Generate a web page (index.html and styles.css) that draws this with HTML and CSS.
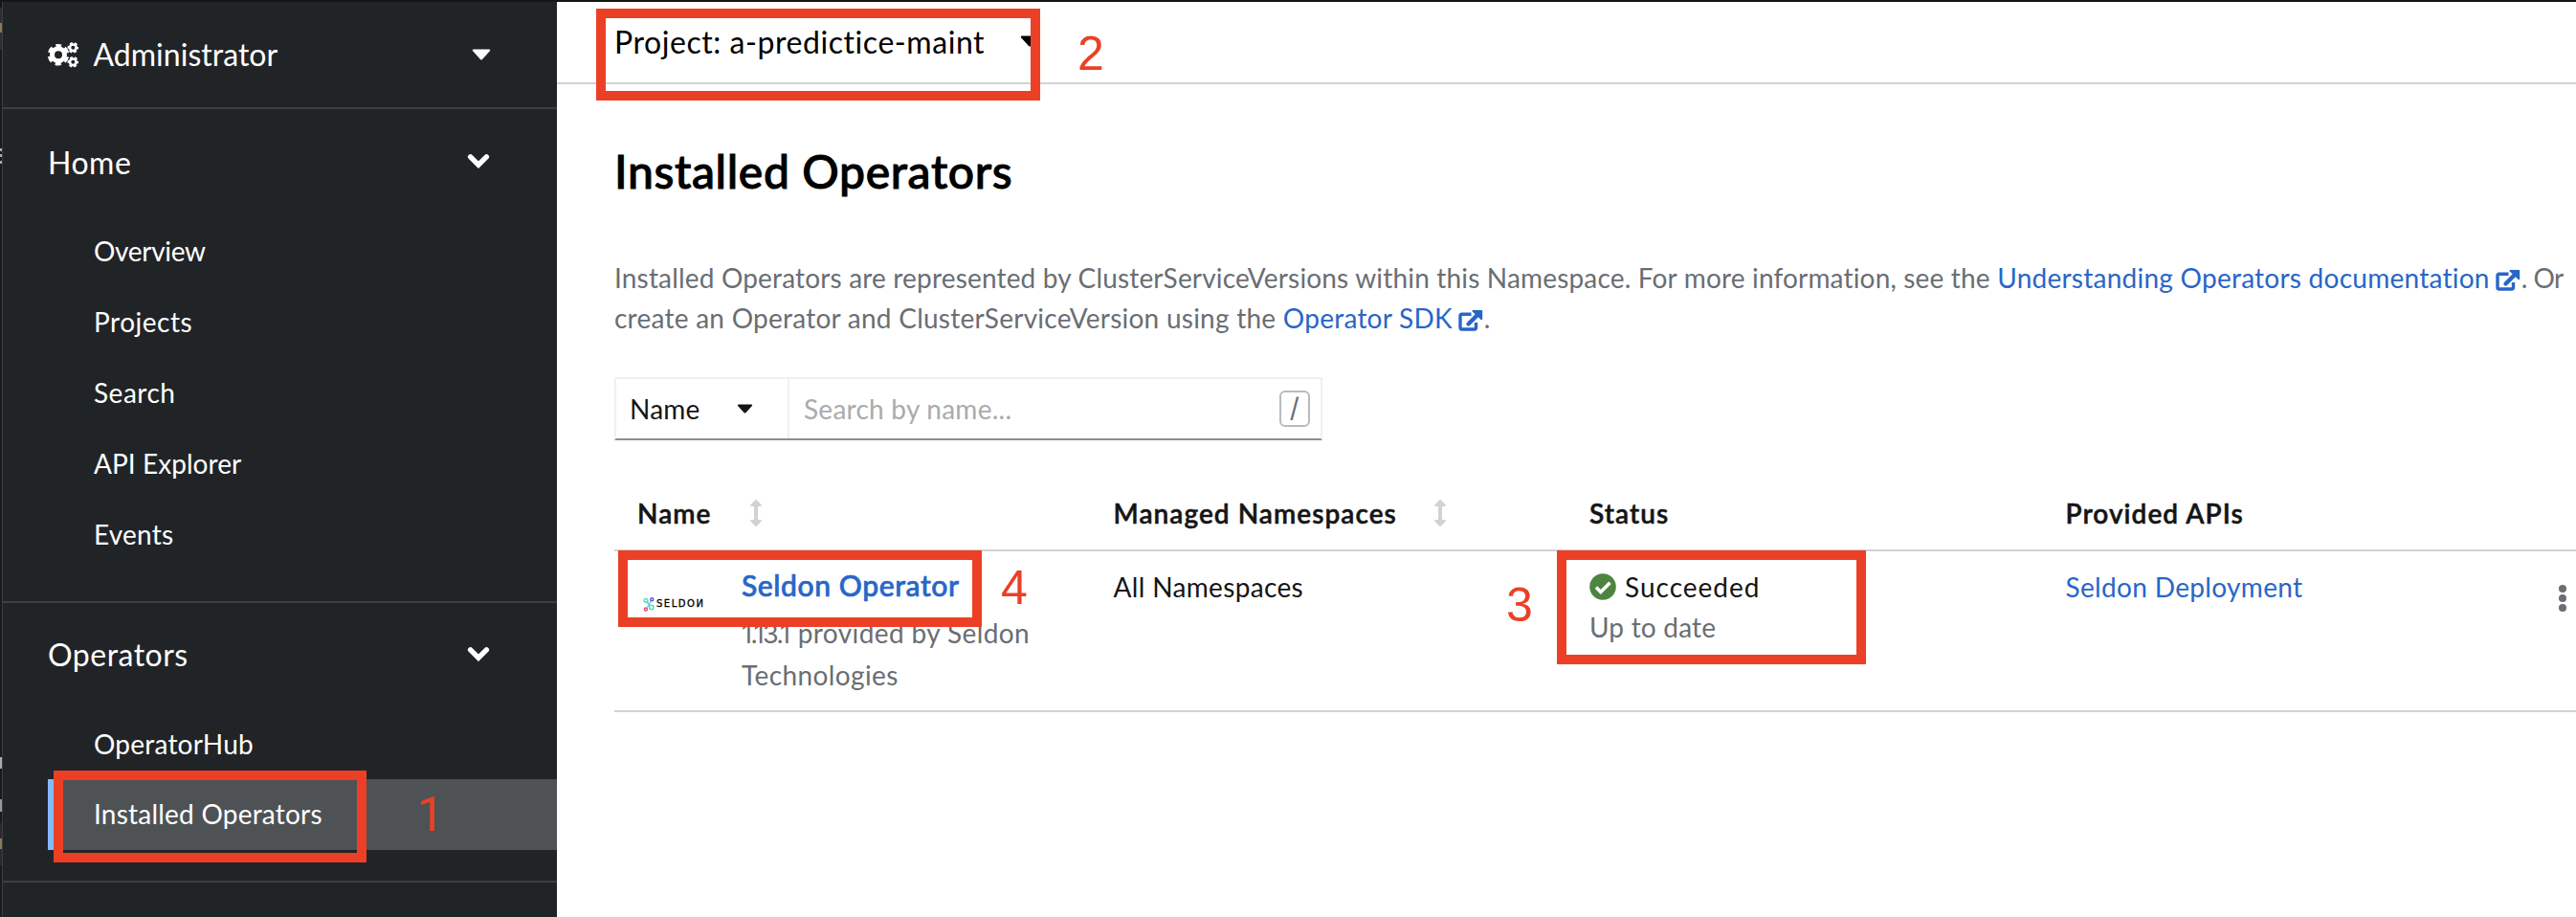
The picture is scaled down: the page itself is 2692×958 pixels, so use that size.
FILE: index.html
```
<!DOCTYPE html>
<html lang="en">
<head>
<meta charset="utf-8">
<title>Installed Operators</title>
<link rel="stylesheet" href="styles.css">
</head>
<body>
<svg class="defs" width="0" height="0">
  <symbol id="chevron" viewBox="0 0 24 16"><path d="M3.6 3.8 12 12.2 20.4 3.8" fill="none" stroke="currentColor" stroke-width="5.4" stroke-linecap="round"/></symbol>
  <symbol id="caret" viewBox="0 0 20 12"><path d="M1.6.5h16.8q1.4.6.5 1.8L11 11q-1 1-2 0L1.1 2.3Q.2 1.1 1.6.5z" fill="currentColor"/></symbol>
  <symbol id="external" viewBox="0 0 26 24"><path d="M13.5 5.3H3.6q-1.6 0-1.6 1.6v12.4q0 1.7 1.6 1.7h13.2q1.7 0 1.7-1.7V14" fill="none" stroke="currentColor" stroke-width="3.4"/><path d="M10.5 15.5 21.5 4.5" stroke="currentColor" stroke-width="4.4" stroke-linecap="round"/><path d="M15.2 1h9q1 0 1 1v8.6q-.6 1.2-1.6.3L14.7 2.5q-.7-1 .5-1.5z" fill="currentColor"/></symbol>
  <symbol id="sort" viewBox="0 0 12 28"><path d="M6 0q.6 0 1 .5l4.7 4.9q.7 1.4-.7 1.7H8v13.8h3q1.4.3.7 1.7L7 27.5q-1 .9-2 0L.3 22.6q-.7-1.4.7-1.7h3V7.1H1Q-.4 6.800.3 5.400L5 .5Q5.400 0 6 0z" fill="currentColor"/></symbol>
</svg>
<div class="app">
  <div class="rail"></div>
  <nav class="sidebar">
    <div class="perspective">
      <svg class="cogs" viewBox="0 0 34 32" fill="none" stroke="#fff">
        <circle cx="12" cy="16.200" r="6.500" stroke-width="5"/>
        <circle cx="12" cy="16.200" r="9.300" stroke-width="4" stroke-dasharray="5.800 3.940" stroke-dashoffset="2.900" transform="rotate(-90 12 16.200)"/>
        <circle cx="27.300" cy="8.800" r="3.300" stroke-width="2.600"/>
        <circle cx="27.300" cy="8.800" r="4.700" stroke-width="2.200" stroke-dasharray="2.800 2.122" stroke-dashoffset="1.400"/>
        <circle cx="27.300" cy="23.800" r="3.300" stroke-width="2.600"/>
        <circle cx="27.300" cy="23.800" r="4.700" stroke-width="2.200" stroke-dasharray="2.800 2.122" stroke-dashoffset="1.400"/>
      </svg>
      <span>Administrator</span>
      <svg class="caret push"><use href="#caret"/></svg>
    </div>
    <section class="group">
      <div class="group-title home"><span>Home</span><svg class="chevron push"><use href="#chevron"/></svg></div>
      <a class="item overview">Overview</a>
      <a class="item projects">Projects</a>
      <a class="item projects">Search</a>
      <a class="item api">API Explorer</a>
      <a class="item">Events</a>
    </section>
    <section class="group operators">
      <div class="group-title"><span>Operators</span><svg class="chevron push"><use href="#chevron"/></svg></div>
      <a class="item">OperatorHub</a>
      <a class="item active">Installed Operators</a>
    </section>
  </nav>
  <main class="main">
    <div class="project"><span>Project: a-predictice-maint</span><svg class="caret"><use href="#caret"/></svg></div>
    <div class="content">
      <h1>Installed Operators</h1>
      <p class="intro"><span class="lead">Installed Operators are represented by ClusterServiceVersions within this Namespace. For more information, see the</span> <a>Understanding Operators documentation<svg class="ext"><use href="#external"/></svg></a><span class="tail">. Or</span><br>create an Operator and ClusterServiceVersion using the <a>Operator SDK<svg class="ext"><use href="#external"/></svg></a><span class="tail">.</span></p>
      <div class="filter">
        <div class="select"><span>Name</span><svg class="caret small"><use href="#caret"/></svg></div>
        <div class="search"><span>Search by name...</span><kbd>/</kbd></div>
      </div>
      <div class="table">
        <div class="row head">
          <div class="cell">Name<svg class="sort n"><use href="#sort"/></svg></div>
          <div class="cell">Managed Namespaces<svg class="sort m"><use href="#sort"/></svg></div>
          <div class="cell">Status</div>
          <div class="cell">Provided APIs</div>
        </div>
        <div class="row">
          <div class="cell operator">
            <div class="logo">
              <svg viewBox="0 0 12 15" fill="none" stroke-width="1.500"><circle cx="3" cy="3.300" r="1.900" stroke="#5cd8c8"/><circle cx="8.800" cy="10.500" r="2.200" stroke="#5cd8c8"/><path d="M4 5 7.400 9M4.500 10.500 8 4" stroke="#5cd8c8"/><circle cx="9.300" cy="2.300" r="1.500" stroke="#5b5be6"/><circle cx="2.900" cy="12.400" r="1.500" stroke="#e94b72"/></svg>
              <span class="brand">SELDO<i>N</i></span>
            </div>
            <div class="about">
              <a class="name">Seldon Operator</a>
              <div class="sub"><span class="version">1.13.1</span> provided by Seldon<br>Technologies</div>
            </div>
          </div>
          <div class="cell ns">All Namespaces</div>
          <div class="cell">
            <div class="status"><svg viewBox="0 0 28 28"><circle cx="14" cy="14" r="13.800" fill="#4f8440"/><path d="m7 14.600 4.800 4.800L21.500 9.700" fill="none" stroke="#fff" stroke-width="3.600"/></svg><span>Succeeded</span></div>
            <div class="muted">Up to date</div>
          </div>
          <div class="cell ns"><a>Seldon Deployment</a></div>
          <div class="kebab"><i></i><i></i><i></i></div>
        </div>
      </div>
    </div>
  </main>
  <div class="box b1"></div><div class="num n1">1</div>
  <div class="box b2"></div><div class="num n2">2</div>
  <div class="box b3"></div><div class="num n3">3</div>
  <div class="box b4"></div><div class="num n4">4</div>
</div>
</body>
</html>
```
FILE: styles.css
```
* { box-sizing: border-box; }
body { margin: 0; font: 28px/42px Lato, "Open Sans", sans-serif; color: #151515; letter-spacing: .2px; background: #fff; }
svg { display: block; flex: none; }
.defs { position: absolute; }
a { color: #2866c8; }
.app { position: relative; display: flex; width: 2692px; height: 958px; border-top: 2px solid #151515; overflow: hidden; }

.rail { width: 2px; background: linear-gradient(#151515 6px, #2e2f34 6px 22px, #8c7b55 22px 32px, #2e2f34 32px 50px, #1a1a1a 50px 153px, #aaa 153px 156px, #1a1a1a 156px 159px, #aaa 159px 162px, #1a1a1a 162px 166px, #aaa 166px 169px, #1a1a1a 169px 789px, #aaa 789px 801px, #1a1a1a 801px 833px, #999 833px 846px, #1a1a1a 846px 858px, #2a2a2f 858px 874px, #8c7b55 874px 885px, #2a2a2f 885px 902px, #1a1a1a 902px); }
.sidebar { width: 580px; flex: none; background: #212427; border-left: 1px solid #3c3f42; color: #fff; }
.perspective { display: flex; align-items: center; height: 112px; padding: 0 69px 0 46px; border-bottom: 2px solid #3c3f42; font-size: 32px; letter-spacing: .02px; }
.cogs { width: 34px; height: 32px; margin-right: 14.500px; }
.push { margin-left: auto; }
.caret { width: 20px; height: 12px; }
.chevron { width: 24px; height: 16px; margin-bottom: 3px; }
.group { display: flex; flex-direction: column; height: 516px; border-bottom: 2px solid #3c3f42; }
.group.operators { height: 292px; }
.group-title { display: flex; align-items: center; height: 110px; padding: 0 70px 2px 47px; font-size: 32px; letter-spacing: .5px; }
.group-title.home { height: 111px; padding-bottom: 0; }
.item { height: 74px; padding-left: 95px; line-height: 75px; color: #fff; letter-spacing: .22px; }
.item.overview { letter-spacing: -.3px; }
.item.projects { letter-spacing: .5px; }
.item.api { letter-spacing: .05px; }
.item.active { margin-left: 47px; padding-left: 40px; border-left: 8px solid #84b9f7; background: #4f5255; line-height: 73px; }

.main { flex: 1; }
.project { display: flex; align-items: center; height: 86px; padding: 0 0 0 60px; border-bottom: 2px solid #d2d2d2; font-size: 32px; letter-spacing: .56px; color: #000; }
.project .caret { margin: 0 0 2px 37px; }
.content { padding: 61px 0 0 60px; }
h1 { margin: 0; font-size: 48px; line-height: 60px; font-weight: 500; letter-spacing: .65px; color: #000; -webkit-text-stroke: 1px #000; }
.intro { margin: 60px 0 0; color: #6a6e73; white-space: nowrap; letter-spacing: .25px; }
.lead { letter-spacing: .17px; }
.tail { letter-spacing: -.5px; }
.ext { display: inline-block; width: 26px; height: 24px; margin: 0 1px 0 6px; vertical-align: -4px; }
.filter { display: flex; width: 740px; height: 66px; margin-top: 41px; border: 2px solid #f0f0f0; border-bottom-color: #8a8d90; }
.select { display: flex; align-items: center; width: 181px; padding-left: 14px; border-right: 2px solid #f0f0f0; }
.caret.small { width: 17px; height: 10px; margin-left: 38px; }
.search { display: flex; flex: 1; align-items: center; justify-content: space-between; padding: 0 11px 0 15px; color: #aaabac; letter-spacing: .25px; }
kbd { width: 32px; height: 38px; border: 2px solid #b8bbbe; border-radius: 6px; font: 28px/33px Inter, sans-serif; color: #6a6e73; text-align: center; }

.table { margin-top: 38px; }
.row { position: relative; display: grid; grid-template-columns: repeat(4, 497.500px) 1fr; height: 168px; padding: 16px 0 0 24px; border-bottom: 2px solid #d2d2d2; }
.row.head { height: 78px; padding-top: 17px; font-weight: 600; letter-spacing: 1.050px; -webkit-text-stroke: .5px #151515; }
.head .cell { display: flex; align-items: center; height: 42px; }
.sort { width: 12px; height: 28px; color: #d2d2d2; }
.sort.n { margin-left: 40px; }
.sort.m { margin-left: 39px; }
.operator { display: flex; margin-top: -2px; }
.logo { display: flex; align-items: center; width: 103px; height: 16px; margin: 33px 0 0 6px; }
.logo svg { width: 12px; height: 15px; margin-right: 2px; }
.brand { font: 10px/16px "DejaVu Sans", sans-serif; letter-spacing: 1.500px; color: #000; -webkit-text-stroke: .3px #000; }
.brand i { display: inline-block; font-style: normal; transform: scaleX(-1) translateX(1px); }
.name { display: block; font-size: 30px; font-weight: 500; letter-spacing: .6px; -webkit-text-stroke: .7px #2866c8; }
.sub { margin-top: 8px; color: #6a6e73; letter-spacing: .4px; white-space: nowrap; }
.version { font-family: Inter, sans-serif; font-size: 27px; letter-spacing: -1.800px; margin-right: 2px; }
.ns { letter-spacing: .34px; }
.status { display: flex; align-items: center; letter-spacing: 1px; }
.status svg { width: 28px; height: 28px; margin-right: 9px; }
.muted { color: #6a6e73; }
.kebab { display: flex; flex-direction: column; align-items: flex-start; gap: 2px; padding: 19px 0 0 18px; }
.kebab i { width: 8px; height: 8px; border-radius: 50%; background: #6a6e73; }

/* Numbered callouts laid over the console */
.box { position: absolute; border: 10px solid #eb4026; }
.b1 { left: 56px; top: 803px; width: 327px; height: 96px; }
.b2 { left: 623px; top: 7px; width: 464px; height: 96px; }
.b3 { left: 1627px; top: 573px; width: 323px; height: 119px; }
.b4 { left: 646px; top: 573px; width: 380px; height: 80px; }
.num { position: absolute; font: 50px/50px "Liberation Sans", Arial, sans-serif; color: #eb4026; letter-spacing: 0; }
.n1 { left: 436px; top: 824px; font-family: Roboto, sans-serif; }
.n2 { left: 1126px; top: 29px; }
.n3 { left: 1574px; top: 605px; }
.n4 { left: 1046px; top: 587px; }
```
